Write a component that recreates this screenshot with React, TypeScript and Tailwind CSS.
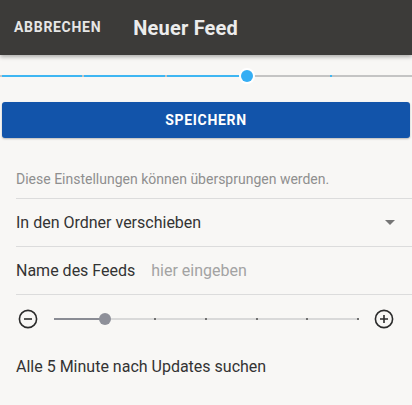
import React from "react";

const font = { fontFamily: "Roboto, 'Noto Sans', sans-serif" };

function StepTrack() {
  const steps = 5;
  const current = 3;
  return (
    <div className="relative h-[42px] flex items-center">
      <div className="relative w-full h-[2px] bg-[#c4c4c4]">
        <div
          className="absolute left-0 top-0 h-full bg-[#3fb6f2]"
          style={{ width: `${(current / steps) * 100}%` }}
        />
        {Array.from({ length: steps }).map((_, i) => (
          <div
            key={i}
            className={`absolute top-0 h-[2px] w-[2px] ${i < current ? "bg-[#c4c4c4]" : "bg-[#3fb6f2]"}`}
            style={{ left: `${(i / steps) * 100}%` }}
          />
        ))}
        <div
          className="absolute top-1/2 -translate-x-1/2 -translate-y-1/2 w-[16px] h-[16px] rounded-full bg-white flex items-center justify-center"
          style={{ left: `${(current / steps) * 100}%` }}
        >
          <div className="w-[12px] h-[12px] rounded-full bg-[#35aef4]" />
        </div>
      </div>
    </div>
  );
}

function IntervalSlider() {
  const steps = 6;
  const value = 1;
  return (
    <div className="flex items-center h-[47px] pl-[18px] pr-[18px]">
      <svg width="20" height="20" viewBox="0 0 20 20" className="text-[#2b2b2b]">
        <circle cx="10" cy="10" r="8.6" fill="none" stroke="currentColor" strokeWidth="1.6" />
        <path d="M6 10h8" stroke="currentColor" strokeWidth="1.6" />
      </svg>
      <div className="relative flex-1 mx-[16px] h-[2px] bg-[#d9d9d9]">
        <div
          className="absolute left-0 top-0 h-full bg-[#8a8c94]"
          style={{ width: `${(value / steps) * 100}%` }}
        />
        {Array.from({ length: steps + 1 }).map((_, i) =>
          i > value ? (
            <div
              key={i}
              className="absolute top-0 w-[2px] h-[2px] bg-[#707070] -translate-x-1/2"
              style={{ left: `${(i / steps) * 100}%` }}
            />
          ) : null
        )}
        <div
          className="absolute top-1/2 -translate-x-1/2 -translate-y-1/2 w-[12px] h-[12px] rounded-full bg-[#8e9099]"
          style={{ left: `${(value / steps) * 100}%` }}
        />
      </div>
      <svg width="20" height="20" viewBox="0 0 20 20" className="text-[#2b2b2b]">
        <circle cx="10" cy="10" r="8.6" fill="none" stroke="currentColor" strokeWidth="1.6" />
        <path d="M6 10h8M10 6v8" stroke="currentColor" strokeWidth="1.6" />
      </svg>
    </div>
  );
}

export default function App() {
  return (
    <div className="w-[412px] h-[405px] bg-[#f8f7f5] overflow-hidden" style={font}>
      <header className="relative z-10 h-[55px] bg-[#3c3b39] flex items-center shadow-[0_2px_4px_rgba(0,0,0,0.3)]">
        <span className="pl-[14px] text-[14px] font-bold text-[#e6e6e6] tracking-[0.7px]">
          ABBRECHEN
        </span>
        <h1 className="ml-[32px] text-[20px] font-bold text-[#ececec] tracking-[0.2px]">Neuer Feed</h1>
      </header>

      <StepTrack />

      <div className="px-[2px] mt-[5px]">
        <button className="w-full h-[36px] rounded-[3px] bg-[#1254aa] text-white text-[14px] font-bold tracking-[0.7px] shadow-[0_1px_2px_rgba(0,0,0,0.25)]">
          SPEICHERN
        </button>
      </div>

      <p className="mt-[31px] pl-[16px] text-[14px] leading-[20px] text-[#8f8f8f]">
        Diese Einstellungen können übersprungen werden.
      </p>

      <div className="ml-[16px] mt-[9px] border-t border-[#dcdcdc]">
        <div className="h-[48px] flex items-center justify-between border-b border-[#dcdcdc] pr-[17px]">
          <span className="text-[16px] text-[#333]">In den Ordner verschieben</span>
          <span className="w-0 h-0 border-l-[5px] border-r-[5px] border-t-[5px] border-l-transparent border-r-transparent border-t-[#757575]" />
        </div>
        <div className="h-[48px] flex items-center border-b border-[#dcdcdc]">
          <span className="text-[16px] text-[#333]">Name des Feeds</span>
          <span className="ml-[16px] text-[16px] text-[#a3a3a3]">hier eingeben</span>
        </div>
      </div>

      <IntervalSlider />

      <p className="mt-[13px] pl-[16px] text-[16px] leading-[24px] text-[#333]">
        Alle 5 Minute nach Updates suchen
      </p>
    </div>
  );
}
